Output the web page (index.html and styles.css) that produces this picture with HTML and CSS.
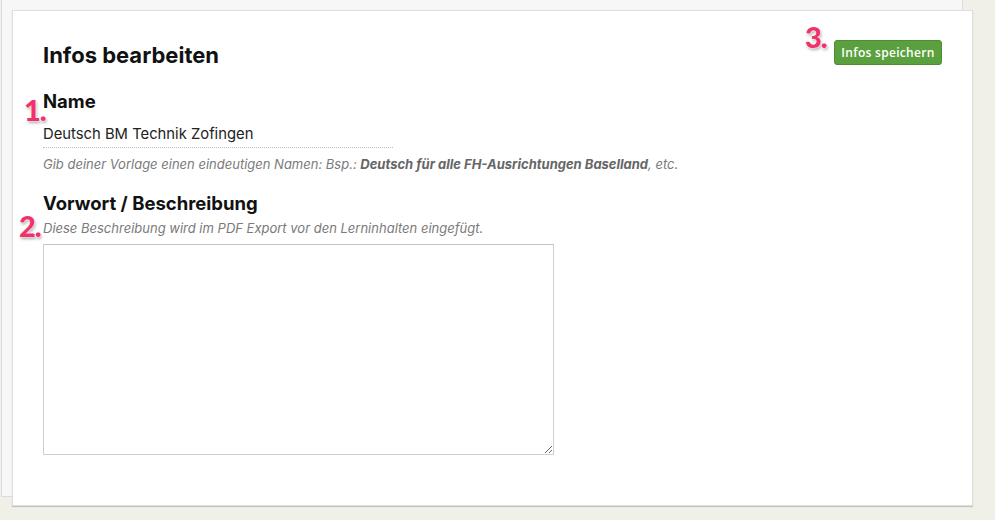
FILE: index.html
```html
<!DOCTYPE html>
<html lang="de">
<head>
<meta charset="utf-8">
<title>Infos bearbeiten</title>
<link rel="stylesheet" href="styles.css">
</head>
<body>
<div class="stage">
  <div class="back-panel"></div>
  <div class="card">
    <div class="card-header">
      <h1 class="title">Infos bearbeiten</h1>
      <button class="btn-save" type="button">Infos speichern</button>
    </div>
    <h2 class="field-label label-name">Name</h2>
    <div class="name-input">Deutsch BM Technik Zofingen</div>
    <p class="hint hint-name">Gib deiner Vorlage einen eindeutigen Namen: Bsp.: <strong>Deutsch für alle FH-Ausrichtungen Baselland</strong>, etc.</p>
    <h2 class="field-label label-desc">Vorwort / Beschreibung</h2>
    <p class="hint hint-desc">Diese Beschreibung wird im PDF Export vor den Lerninhalten eingefügt.</p>
    <textarea class="desc-area"></textarea>
  </div>
  <span class="marker marker-1">1.</span>
  <span class="marker marker-2">2.</span>
  <span class="marker marker-3">3.</span>
</div>
</body>
</html>
```

FILE: styles.css
```css
html, body {
  margin: 0;
  padding: 0;
}
body {
  background: #f0efe8;
  font-family: "Inter", "Lato", sans-serif;
  color: #1a1a1a;
  width: 995px;
  height: 520px;
  overflow: hidden;
}
.stage {
  position: relative;
  display: grid;
  width: 995px;
  height: 520px;
}
.back-panel {
  grid-area: 1 / 1;
  width: 960px;
  height: 496px;
  margin-left: 1px;
  background: #f7f7f7;
  border: 1px solid #dcdcdc;
  border-top: none;
}
.card {
  grid-area: 1 / 1;
  align-self: start;
  justify-self: start;
  margin: 10px 0 0 12px;
  width: 899px;
  height: 463px;
  padding: 31px 30px 0 30px;
  background: #fff;
  border: 1px solid #dedede;
  box-shadow: 0 1px 1px rgba(0,0,0,0.18);
  display: flex;
  flex-direction: column;
  align-items: flex-start;
}
.card-header {
  display: flex;
  justify-content: space-between;
  align-items: flex-start;
  align-self: stretch;
}
.title {
  margin: 0;
  font-size: 22px;
  line-height: 27px;
  font-weight: 700;
  color: #111;
}
.btn-save {
  margin-top: -2px;
  width: 108px;
  height: 25px;
  padding: 0;
  border: 1px solid #4e8f35;
  border-radius: 3px;
  background: #5aa03e;
  color: #fff;
  font-family: "Open Sans", "DejaVu Sans", sans-serif;
  font-size: 12px;
  font-weight: 600;
  letter-spacing: 0.3px;
}
.field-label {
  margin: 0;
  font-size: 18.5px;
  line-height: 22px;
  font-weight: 700;
  color: #111;
}
.label-name {
  margin-top: 21px;
}
.name-input {
  margin-top: 12px;
  width: 350px;
  font-size: 14.8px;
  line-height: 20px;
  padding-bottom: 3px;
  border-bottom: 1px dotted #bdbdbd;
  color: #222;
}
.hint {
  margin: 7px 0 0 0;
  font-size: 13px;
  line-height: 18px;
  font-style: italic;
  color: #7a7a7a;
}
.hint strong {
  color: #666;
  font-weight: 700;
}
.label-desc {
  margin-top: 19px;
}
.hint-desc {
  margin-top: 5px;
}
.desc-area {
  margin-top: 7px;
  width: 511px;
  height: 211px;
  box-sizing: border-box;
  border: 1px solid #cfcfcf;
  border-top-color: #c4c4c4;
  padding: 4px;
  background: #fff;
  font-family: "Inter", sans-serif;
}
.marker {
  position: absolute;
  font-family: "Lato", sans-serif;
  font-size: 29px;
  line-height: 28px;
  font-weight: 900;
  color: #f0316a;
  text-shadow: 0 0 2px #fff, 0 0 2px #fff, 1px 2px 3px rgba(0,0,0,0.35);
  letter-spacing: -1px;
}
.marker-1 { left: 24px; top: 96px; }
.marker-2 { left: 19px; top: 212px; }
.marker-3 { left: 805px; top: 23px; }
```
